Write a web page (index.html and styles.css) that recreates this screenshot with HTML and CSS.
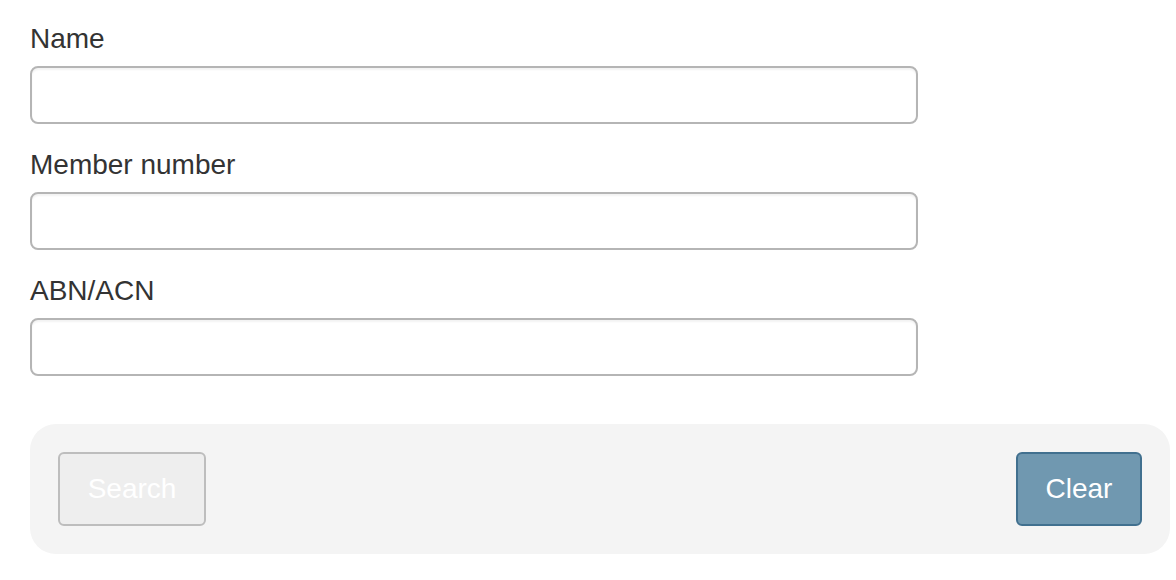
FILE: index.html
```html
<!DOCTYPE html>
<html lang="en">
<head>
    <meta charset="UTF-8">
    <meta name="viewport" content="width=device-width, initial-scale=1.0">
    <title>Member search</title>
    <link rel="stylesheet" href="styles.css">
</head>
<body>
    <form class="search-form">
        <div class="field">
            <label for="name">Name</label>
            <input type="text" id="name">
        </div>
        <div class="field">
            <label for="member">Member number</label>
            <input type="text" id="member">
        </div>
        <div class="field">
            <label for="abn">ABN/ACN</label>
            <input type="text" id="abn">
        </div>

        <div class="actions">
            <button type="button" class="btn btn-search" disabled>Search</button>
            <button type="reset" class="btn btn-clear">Clear</button>
        </div>
    </form>
</body>
</html>
```

FILE: styles.css
```css
body{
    margin: 0;
    font-family: "Liberation Sans", Arial, sans-serif;
    color: #333;
    background: #fff;
}

.search-form{
    padding: 24px 6px 0 30px;
}

.field{
    margin-bottom: 26px;
}

.field label{
    display: block;
    font-size: 28px;
    line-height: 30px;
    margin-bottom: 12px;
}

.field input{
    display: block;
    box-sizing: border-box;
    width: 888px;
    height: 58px;
    border: 2px solid #b5b5b5;
    border-radius: 8px;
    background: #fff;
    box-shadow: inset 0 2px 2px rgba(0,0,0,0.05);
    outline: none;
}

.actions{
    display: flex;
    justify-content: space-between;
    margin-top: 48px;
    padding: 28px;
    background: #f4f4f4;
    border-radius: 26px;
}

.btn{
    box-sizing: border-box;
    height: 74px;
    padding: 0;
    font-family: inherit;
    font-size: 28px;
    border-radius: 6px;
    color: #fff;
}

.btn-search{
    width: 148px;
    background: #eeeeee;
    border: 2px solid #bdbdbd;
}

.btn-clear{
    width: 126px;
    background: #7098b0;
    border: 2px solid #41708f;
}
```
